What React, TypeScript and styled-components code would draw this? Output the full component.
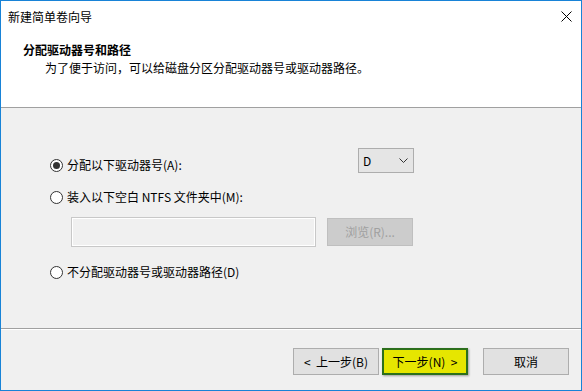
import React from 'react';
import styled, { createGlobalStyle, css } from 'styled-components';

const GlobalStyle = createGlobalStyle`
  html, body {
    margin: 0;
    padding: 0;
    background: #ffffff;
  }
  body {
    font-family: "Noto Sans CJK SC", "Noto Sans", "Liberation Sans", sans-serif;
    font-size: 12px;
    color: #000;
  }
`;

const Window = styled.div`
  width: 582px;
  height: 391px;
  box-sizing: border-box;
  border: 1px solid #1883d7;
  display: flex;
  flex-direction: column;
  background: #f0f0f0;
  overflow: hidden;
`;

const TitleBar = styled.div`
  height: 30px;
  flex: none;
  display: flex;
  align-items: center;
  justify-content: space-between;
  padding: 0 9px 0 7px;
  background: #fff;
  .title {
    line-height: 16px;
    margin-top: 2px;
  }
  svg {
    display: block;
  }
`;

const Header = styled.div`
  height: 77px;
  flex: none;
  box-sizing: border-box;
  padding: 11px 0 0 22px;
  background: #fff;
  border-bottom: 1px solid #a0a0a0;
  h1 {
    margin: 0;
    font-size: 12px;
    font-weight: 700;
    line-height: 16px;
  }
  p {
    margin: 2px 0 0 22px;
    line-height: 16px;
  }
`;

const Body = styled.div`
  flex: 1;
  padding: 40px 0 0 49px;
  width: 364px;
`;

const OptionRow = styled.div`
  display: flex;
  align-items: flex-end;
  justify-content: space-between;
`;

const Option = styled.label<{ $gap?: number }>`
  display: flex;
  align-items: center;
  gap: 4px;
  line-height: 16px;
  height: 16px;
  margin-top: ${p => p.$gap || 0}px;
`;

const Radio = styled.span<{ $checked?: boolean }>`
  width: 13px;
  height: 13px;
  box-sizing: border-box;
  border: 1px solid #333;
  border-radius: 50%;
  background: #fff;
  display: flex;
  align-items: center;
  justify-content: center;
  ${p =>
    p.$checked &&
    css`
      &::after {
        content: '';
        width: 7px;
        height: 7px;
        border-radius: 50%;
        background: #333;
      }
    `}
`;

const Select = styled.div`
  width: 56px;
  height: 25px;
  box-sizing: border-box;
  border: 1px solid #adadad;
  background: #e5e5e5;
  display: flex;
  align-items: center;
  justify-content: space-between;
  padding: 0 5px 0 4px;
  svg {
    display: block;
  }
`;

const PathRow = styled.div`
  display: flex;
  align-items: center;
  gap: 11px;
  margin: 12px 0 0 21px;
`;

const PathInput = styled.div`
  width: 245px;
  height: 30px;
  box-sizing: border-box;
  border: 1px solid #c8c8c8;
  box-shadow: inset 0 0 0 1px #fff;
  background: #f0f0f0;
`;

const Button = styled.button<{ $variant?: 'disabled' | 'focus' }>`
  width: 86px;
  height: 27px;
  box-sizing: border-box;
  border: 1px solid #adadad;
  background: #e1e1e1;
  font-family: inherit;
  font-size: 12px;
  color: #000;
  padding: 0;
  line-height: 16px;
  white-space: pre;
  ${p =>
    p.$variant === 'disabled' &&
    css`
      height: 28px;
      background: #cccccc;
      border-color: #bfbfbf;
      color: #a0a0a0;
    `}
  ${p =>
    p.$variant === 'focus' &&
    css`
      background: #e6e600;
      border: 2px solid #2c6f1c;
      box-shadow: 1px 1px 2px rgba(0, 0, 0, 0.35);
    `}
`;

const Footer = styled.div`
  flex: none;
  height: 62px;
  box-sizing: border-box;
  border-top: 1px solid #a0a0a0;
  box-shadow: inset 0 1px #ffffff;
  display: flex;
  align-items: flex-start;
  justify-content: flex-end;
  padding: 19px 12px 0 0;
  .nav {
    display: flex;
    gap: 3px;
    margin-right: 15px;
  }
`;

const App = () => (
  <>
    <GlobalStyle />
    <Window>
      <TitleBar>
        <span className="title">新建简单卷向导</span>
        <svg width="11" height="11" viewBox="0 0 11 11">
          <path d="M0.5 0.5 L10.5 10.5 M10.5 0.5 L0.5 10.5" stroke="#000" strokeWidth="1" />
        </svg>
      </TitleBar>
      <Header>
        <h1>分配驱动器号和路径</h1>
        <p>为了便于访问，可以给磁盘分区分配驱动器号或驱动器路径。</p>
      </Header>
      <Body>
        <OptionRow>
          <Option>
            <Radio $checked />
            分配以下驱动器号(A):
          </Option>
          <Select>
            <span>D</span>
            <svg width="9" height="5" viewBox="0 0 9 5">
              <path d="M0.5 0.5 L4.5 4.5 L8.5 0.5" stroke="#333" fill="none" strokeWidth="1" />
            </svg>
          </Select>
        </OptionRow>
        <Option $gap={16}>
          <Radio />
          装入以下空白 NTFS 文件夹中(M):
        </Option>
        <PathRow>
          <PathInput />
          <Button $variant="disabled">浏览(R)...</Button>
        </PathRow>
        <Option $gap={17}>
          <Radio />
          不分配驱动器号或驱动器路径(D)
        </Option>
      </Body>
      <Footer>
        <div className="nav">
          <Button>{'<  上一步(B)'}</Button>
          <Button $variant="focus">{'下一步(N)  >'}</Button>
        </div>
        <Button>取消</Button>
      </Footer>
    </Window>
  </>
);

export default App;
